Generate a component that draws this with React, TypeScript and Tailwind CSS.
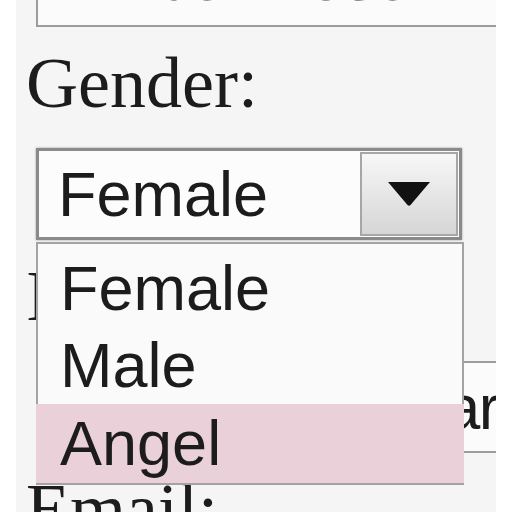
const sans = "font-['Liberation_Sans',Arial,sans-serif]";
const serif = "font-['Liberation_Serif','Times_New_Roman',serif]";

function Label({ text }: { text: string }) {
  return (
    <div
      className={`${serif} h-[121px] -ml-[10px] pt-[20px] text-[72px] leading-none text-[#1c1c1c]`}
    >
      {text}
    </div>
  );
}

function TextBox({ value, className = "" }: { value: string; className?: string }) {
  return (
    <div
      className={`${sans} h-[92px] w-[520px] shrink-0 border-2 border-[#9c9c9c] bg-[#fbfbfb] pl-[22px] flex items-center text-[63px] text-[#1c1c1c] whitespace-nowrap ${className}`}
    >
      {value}
    </div>
  );
}

const options = ["Female", "Male", "Angel"];

export default function App() {
  const highlighted = 2;
  return (
    <div className="w-[512px] h-[512px] bg-white flex justify-center overflow-hidden">
      <div className="w-[480px] h-full bg-[#f5f5f5] overflow-hidden pl-[20px]">
        <div className="-mt-[65px] flex flex-col">
          <TextBox value="Amber Rose" className="pb-[5px]" />
          <Label text="Gender:" />

          {/* open select */}
          <div className="relative z-10 w-[426px]">
            <div className="h-[92px] border-[3px] border-[#8a8a8a] bg-[#fcfcfc] flex shadow-[0_0_2px_#999]">
              <div
                className={`${sans} flex-1 pl-[19px] flex items-center text-[63px] text-[#1c1c1c]`}
              >
                Female
              </div>
              <div className="w-[98px] my-[1px] mr-[1px] border-2 border-[#a6a6a6] bg-gradient-to-b from-[#f7f7f7] to-[#d6d6d6] flex items-center justify-center">
                <svg width="44" height="26" viewBox="0 0 44 26">
                  <path d="M1 1 L43 1 L23.5 24 Q22 25.5 20.5 24 Z" fill="#111" />
                </svg>
              </div>
            </div>
            <div className="absolute left-0 top-[94px] w-[428px] border-2 border-[#a3a3a3] bg-[#fafafa] pt-[6px]">
              {options.map((o, i) => (
                <div
                  key={o}
                  className={`${sans} pl-[22px] text-[63px] text-[#1c1c1c] ${
                    i === highlighted
                      ? "h-[79px] leading-[79px] bg-[#e9d0d9] -mx-[2px] pl-[24px]"
                      : "h-[77px] leading-[77px]"
                  }`}
                >
                  {o}
                </div>
              ))}
            </div>
          </div>

          <Label text="Interests:" />
          <TextBox value="Music and guitar" className="tracking-[-1.5px]" />
          <Label text="Email:" />
        </div>
      </div>
    </div>
  );
}
